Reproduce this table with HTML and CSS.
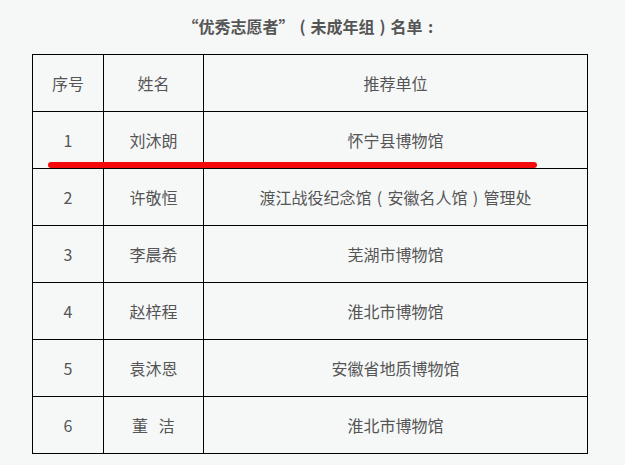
FILE: index.html
```html
<!DOCTYPE html>
<html lang="zh">
<head>
<meta charset="utf-8">
<link rel="stylesheet" href="styles.css">
</head>
<body>
<div class="page">
  <h3 class="title">“优秀志愿者”<span class="fw">(</span>未成年组<span class="fw">)</span>名单<span class="fw">:</span></h3>
  <table class="list">
    <tr><td class="c1">序号</td><td class="c2">姓名</td><td class="c3">推荐单位</td></tr>
    <tr><td>1</td><td>刘沐朗</td><td>怀宁县博物馆</td></tr>
    <tr><td>2</td><td>许敬恒</td><td>渡江战役纪念馆<span class="fw">(</span>安徽名人馆<span class="fw">)</span>管理处</td></tr>
    <tr><td>3</td><td>李晨希</td><td>芜湖市博物馆</td></tr>
    <tr><td>4</td><td>赵梓程</td><td>淮北市博物馆</td></tr>
    <tr><td>5</td><td>袁沐恩</td><td>安徽省地质博物馆</td></tr>
    <tr><td>6</td><td>董&nbsp;&nbsp;&nbsp;洁</td><td>淮北市博物馆</td></tr>
  </table>
  <div class="mark"></div>
</div>
</body>
</html>
```
FILE: styles.css
```css
html, body {
  margin: 0;
  padding: 0;
  background: #f6f8f8;
}
body {
  font-family: "Microsoft YaHei", "Noto Sans CJK SC", sans-serif;
  color: #555;
}
.page {
  position: relative;
  width: 625px;
  height: 465px;
  padding: 0 38px 0 32px;
  box-sizing: border-box;
}
.title {
  margin: 0;
  height: 54px;
  line-height: 52px;
  font-size: 16px;
  font-weight: bold;
  color: #555;
  text-align: center;
  padding-left: 2px;
}
.fw {
  display: inline-block;
  width: 1em;
  text-align: center;
}
.list {
  width: 556px;
  border-collapse: collapse;
  table-layout: fixed;
  font-size: 16px;
}
.list td {
  border: 1px solid #000;
  height: 56px;
  padding: 0;
  text-align: center;
  vertical-align: middle;
}
.c1 { width: 70px; }
.c2 { width: 99px; }
.mark {
  position: absolute;
  left: 48px;
  top: 162px;
  width: 489px;
  height: 6px;
  border-radius: 3px;
  background: #f50b0b;
}
```
